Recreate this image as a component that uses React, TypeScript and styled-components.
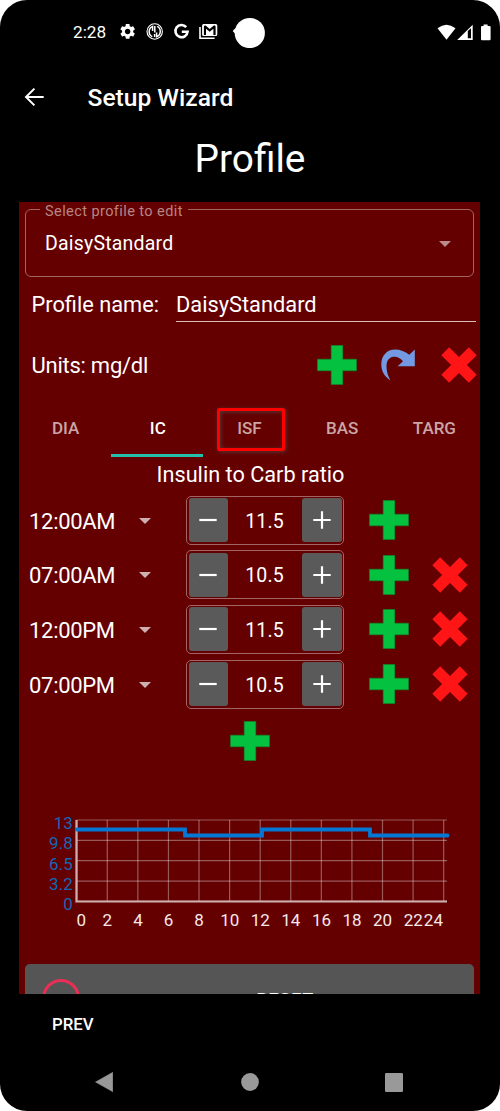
import React from "react";
import styled, { createGlobalStyle } from "styled-components";

const GlobalStyle = createGlobalStyle`
  * { box-sizing: border-box; }
  body {
    margin: 0;
    background: #fff;
    font-family: Roboto, "Liberation Sans", sans-serif;
    color: #fff;
  }
  svg { display: block; flex: none; }
  button {
    font: inherit;
    color: inherit;
    background: none;
    border: 0;
    padding: 0;
    margin: 0;
  }
`;

const Phone = styled.div`
  width: 500px;
  height: 1111px;
  background: #000;
  border-radius: 27px;
  overflow: hidden;
  display: flex;
  flex-direction: column;
`;

const StatusBar = styled.header`
  height: 64px;
  padding: 0 9px 0 73px;
  display: flex;
  align-items: center;
  flex: none;
`;

const Clock = styled.span`
  width: 46px;
  font-size: 17.2px;
  line-height: 64px;
`;

const StatusIcons = styled.div`
  display: flex;
  align-items: center;
  flex: 1;
`;

const SystemIcons = styled.div`
  display: flex;
  align-items: center;
`;

const AppBar = styled.div`
  height: 68px;
  padding-left: 22px;
  display: flex;
  align-items: center;
  gap: 41.5px;
  flex: none;
`;

const AppTitle = styled.h1`
  margin: 0;
  font-size: 24.6px;
  font-weight: 500;
  line-height: 68px;
`;

const PageTitle = styled.h2`
  margin: 0;
  height: 70px;
  line-height: 54px;
  font-size: 38.8px;
  font-weight: 400;
  text-align: center;
  flex: none;
`;

const Panel = styled.main`
  width: 461px;
  height: 792px;
  margin-left: 19px;
  background: #640000;
  overflow: hidden;
  flex: none;
  display: flex;
  flex-direction: column;
`;

const ProfileSelect = styled.fieldset`
  height: 75px;
  margin: 0 6px;
  padding: 0 22px 0 19px;
  border: 1px solid #a26464;
  border-radius: 6px;
  flex: none;
  min-width: 0;
`;

const SelectLegend = styled.legend`
  margin-left: -5px;
  padding: 4px 5px 0 5px;
  font-size: 14.5px;
  line-height: 11px;
  letter-spacing: 0.42px;
  color: #b68686;
`;

const SelectBody = styled.div`
  height: 53px;
  display: flex;
  align-items: center;
  justify-content: space-between;
`;

const SelectValue = styled.span`
  padding-top: 1px;
  font-size: 19.5px;
  line-height: 24px;
  letter-spacing: 0.2px;
`;

const Field = styled.label`
  height: 55px;
  padding: 0 4px 0 12.5px;
  display: flex;
  align-items: center;
  font-size: 21.8px;
  flex: none;
`;

const FieldName = styled.span`
  width: 144.5px;
`;

const FieldInput = styled.span`
  flex: 1;
  height: 34px;
  line-height: 34px;
  border-bottom: 1px solid #d8bcbc;
`;

const UnitsRow = styled.div`
  height: 66px;
  padding: 0 3px 0 12.5px;
  display: flex;
  align-items: center;
  font-size: 22px;
  letter-spacing: -0.25px;
  flex: none;
`;

const UnitsText = styled.span`
  flex: 1;
`;

const Tools = styled.div`
  display: grid;
  grid-template-columns: 64px 60px 36px;
  align-items: center;
`;

const Tabs = styled.nav`
  height: 59px;
  display: grid;
  grid-template-columns: repeat(5, 1fr);
  flex: none;
`;

const Tab = styled.button<{ $active?: boolean }>`
  display: flex;
  align-items: center;
  justify-content: center;
  padding: 3px 0 0 1px;
  border-bottom: 3px solid ${(p) => (p.$active ? "#25c0ac" : "transparent")};
  font-size: 17px;
  font-weight: 500;
  color: ${(p) => (p.$active ? "#fff" : "#cba6a6")};
`;

const Highlight = styled.span`
  width: 68px;
  height: 43px;
  margin: 3px -8px 0 -6px;
  border: 3px solid #fe0000;
  border-radius: 2px;
  box-shadow: 1px 1px 4px rgba(90, 60, 60, 0.9), inset 1px 1px 4px rgba(90, 60, 60, 0.9);
  display: flex;
  align-items: center;
  justify-content: center;
  padding: 0 3px 2px 0;
`;

const SectionTitle = styled.h3`
  margin: 0;
  height: 36px;
  padding-left: 2px;
  line-height: 36px;
  font-size: 21.7px;
  font-weight: 400;
  text-align: center;
  flex: none;
`;

const Rows = styled.div`
  height: 218.4px;
  display: grid;
  grid-template-rows: repeat(4, 54.6px);
  flex: none;
`;

const Row = styled.div`
  display: grid;
  grid-template-columns: 119px 48px 158px 25px 40px 23px 36px;
  align-items: center;
`;

const Time = styled.span`
  padding: 3px 0 0 10px;
  font-size: 22px;
  line-height: 48px;
  letter-spacing: -0.3px;
`;

const CaretSlot = styled.span`
  padding: 1px 0 0 0.5px;
`;

const Stepper = styled.div`
  height: 49px;
  padding: 1.5px;
  border: 1px solid #a26464;
  border-radius: 5px;
  display: flex;
  align-items: center;
`;

const StepButton = styled.button`
  width: 39.5px;
  height: 44px;
  background: #5a5a5b;
  border-radius: 3px;
  display: flex;
  align-items: center;
  justify-content: center;
`;

const StepValue = styled.span`
  flex: 1;
  padding: 3px 1px 0 0;
  text-align: center;
  font-size: 19.5px;
  line-height: 40px;
  letter-spacing: 0.1px;
`;

const Cell = styled.div<{ $col: number }>`
  grid-column: ${(p) => p.$col};
  grid-row: 1;
`;

const AddRow = styled.div`
  height: 99.6px;
  padding: 10px 0 0 1px;
  display: flex;
  justify-content: center;
  flex: none;
`;

const ChartArea = styled.div`
  height: 153px;
  flex: none;
`;

const ResetButton = styled.button`
  height: 68px;
  margin: 0 6px;
  padding-left: 15.5px;
  background: #555;
  border-radius: 5px;
  display: flex;
  align-items: center;
  flex: none;
`;

const ResetLabel = styled.span`
  flex: 1;
  padding: 3px 0 0 16px;
  text-align: center;
  font-size: 18px;
  font-weight: 500;
  letter-spacing: 0.8px;
`;

const Footer = styled.footer`
  height: 60px;
  padding-left: 52px;
  display: flex;
  align-items: center;
  font-size: 16.8px;
  font-weight: 500;
  flex: none;
`;

const NavBar = styled.nav`
  height: 57px;
  padding: 0 97px 0 95px;
  display: flex;
  justify-content: space-between;
  align-items: flex-start;
  flex: none;
`;

const NavKey = styled.button`
  height: 56px;
  display: flex;
  align-items: center;
`;

const Plus = () => (
  <svg width="40" height="40" viewBox="0 0 40 40">
    <path d="M14.2 .5H25.8V14.2H39.5V25.8H25.8V39.5H14.2V25.8H.5V14.2H14.2Z" fill="#04c23f" stroke="#0c8c2c" strokeWidth=".6" />
  </svg>
);

const Cross = () => (
  <svg width="36" height="36" viewBox="0 0 36 36">
    <path d="M8.2 .3L18 10.1 27.8 .3 35.7 8.2 25.9 18 35.7 27.8 27.8 35.7 18 25.9 8.2 35.7 .3 27.8 10.1 18 .3 8.2Z" fill="#ff1515" />
  </svg>
);

const Redo = () => (
  <svg width="34" height="32" viewBox="0 0 34 32">
    <path d="M9.5 31.5C3 27 .3 22 .3 15.5C.3 6.5 6 .5 14 .5C19.5 .5 24 2.5 28.3 5.8L33.8 .5V17.2H16.6L22 12.2C19 8.8 15.8 7.3 12.5 7.8C7.8 8.4 5.4 12 5.5 17.5C5.6 22.5 6.8 27 9.5 31.5Z" fill="#7399e2" />
  </svg>
);

const Caret = ({ color = "#ceb0b0" }: { color?: string }) => (
  <svg width="12" height="6" viewBox="0 0 12 6">
    <path d="M0 0H12L6 6Z" fill={color} />
  </svg>
);

const StepSign = ({ plus }: { plus?: boolean }) => (
  <svg width="18" height="18" viewBox="0 0 18 18">
    <path d={plus ? "M.3 9H17.7M9 .3V17.7" : "M.3 9H17.7"} stroke="#fff" strokeWidth="2.2" />
  </svg>
);

const NotificationIcons = () => (
  <svg width="146" height="32" viewBox="119 16 146 32" fill="#fff">
    <g transform="translate(118.4 22.2) scale(.77)">
      <path d="M19.14 12.94c.04-.3.06-.61.06-.94s-.02-.64-.07-.94l2.03-1.58c.18-.14.23-.41.12-.61l-1.92-3.32c-.12-.22-.37-.29-.59-.22l-2.39.96c-.5-.38-1.03-.7-1.62-.94l-.36-2.54c-.04-.24-.24-.41-.48-.41h-3.84c-.24 0-.43.17-.47.41l-.36 2.54c-.59.24-1.13.57-1.62.94l-2.39-.96c-.22-.08-.47 0-.59.22L2.74 8.87c-.12.21-.08.47.12.61l2.03 1.58c-.05.3-.09.63-.09.94s.02.64.07.94l-2.03 1.58c-.18.14-.23.41-.12.61l1.92 3.32c.12.22.37.29.59.22l2.39-.96c.5.38 1.03.7 1.62.94l.36 2.54c.05.24.24.41.48.41h3.84c.24 0 .44-.17.47-.41l.36-2.54c.59-.24 1.13-.56 1.62-.94l2.39.96c.22.08.47 0 .59-.22l1.92-3.32c.12-.22.07-.47-.12-.61l-2.01-1.58zM12 15.6c-1.98 0-3.6-1.62-3.6-3.6s1.62-3.6 3.6-3.6 3.6 1.62 3.6 3.6-1.62 3.6-3.6 3.6z" />
    </g>
    <g fill="none" stroke="#fff">
      <circle cx="154.7" cy="31.5" r="7.7" strokeWidth="1.1" />
      <path d="M152.3 36.6A5.6 5.6 0 0 1 152.6 26.4V31M157.1 26.4A5.6 5.6 0 0 1 156.6 36.7V32.4M154.8 26V32.5M154.6 37V34" strokeWidth="1.5" />
    </g>
    <path d="M186.2 27.2A6.1 6.1 0 1 0 187.6 31.7H181.8" fill="none" stroke="#fff" strokeWidth="2.6" />
    <path d="M200 27V38.2H214.6" fill="none" stroke="#fff" strokeWidth="1.6" />
    <path d="M203.6 24.1H215.8Q217.3 24.1 217.3 25.6V34.6Q217.3 36.1 215.8 36.1H203.6Q202.1 36.1 202.1 34.6V25.6Q202.1 24.1 203.6 24.1ZM203.9 26.4V34.9H206V28.8L209.7 31.8 213.4 28.8V34.9H215.6V26.4L215 25.6H213.8L209.7 28.9 205.6 25.6H204.5Z" fillRule="evenodd" />
    <circle cx="249.8" cy="33" r="15.1" />
    <path d="M232.8 31.2Q233 30 236 28V34.5Z" />
  </svg>
);

const SignalIcons = () => (
  <svg width="54" height="18" viewBox="437 22 54 18" fill="#fff">
    <path d="M437.5 27.2Q446.5 20.2 455.5 27.2L446.5 38.7Z" />
    <path d="M457.2 39L472.7 23.8V39ZM467.8 30V37.3H471V27.2Z" fillRule="evenodd" />
    <path d="M483.6 23.5H487.6V25H489.6Q490.6 25 490.6 26V38Q490.6 39.3 489.6 39.3H482Q481 39.3 481 38V26Q481 25 482 25H483.6Z" />
  </svg>
);

const hours = [0, 2, 4, 6, 8, 10, 12, 14, 16, 18, 20, 22, 24];
const ratios = ["13", "9.8", "6.5", "3.2", "0"];
const columnWidth = 30.58;
const bandHeight = 20.35;

const RatioChart = () => (
  <svg width="461" height="130" viewBox="19 811 461 130" fontFamily="Roboto, sans-serif" fontSize="17">
    <g stroke="#fff" strokeOpacity=".35" strokeWidth="1.2">
      {ratios.map((r, i) => (
        <path key={r} d={`M76.5 ${820 + i * bandHeight}H447`} />
      ))}
      {hours.map((h, i) => (
        <path key={h} d={`M${76.7 + i * columnWidth} 820V901.5`} />
      ))}
    </g>
    <path d="M76.5 820V901.5H447" fill="none" stroke="#d0b1b1" strokeWidth="2.2" />
    <path d="M76.8 829.5H185V835.5H262V829.5H370V835.5H447.6" fill="none" stroke="#0277d3" strokeWidth="3.8" strokeLinecap="round" />
    <g fill="#1068b8" textAnchor="end" letterSpacing=".1">
      {ratios.map((r, i) => (
        <text key={r} x="73" y={828.9 + i * bandHeight}>{r}</text>
      ))}
    </g>
    <g fill="#f4e8e8" textAnchor="middle">
      {hours.map((h, i) => (
        <text key={h} x={h === 0 ? 81.3 : h === 24 ? 433.4 : 76.8 + i * columnWidth} y="926.2">{h}</text>
      ))}
    </g>
  </svg>
);

const entries = [
  { time: "12:00AM", value: "11.5" },
  { time: "07:00AM", value: "10.5" },
  { time: "12:00PM", value: "11.5" },
  { time: "07:00PM", value: "10.5" },
];

export default function App() {
  return (
    <>
      <GlobalStyle />
      <Phone>
        <StatusBar>
          <Clock>2:28</Clock>
          <StatusIcons><NotificationIcons /></StatusIcons>
          <SystemIcons><SignalIcons /></SystemIcons>
        </StatusBar>
        <AppBar>
          <svg width="24" height="24" viewBox="0 0 24 24" fill="none" stroke="#fff" strokeWidth="2">
            <path d="M21.7 11H4M12.4 2.6L4 11L12.4 19.4" />
          </svg>
          <AppTitle>Setup Wizard</AppTitle>
        </AppBar>
        <PageTitle>Profile</PageTitle>
        <Panel>
          <ProfileSelect>
            <SelectLegend>Select profile to edit</SelectLegend>
            <SelectBody>
              <SelectValue>DaisyStandard</SelectValue>
              <Caret color="#b98c8c" />
            </SelectBody>
          </ProfileSelect>
          <Field>
            <FieldName>Profile name:</FieldName>
            <FieldInput>DaisyStandard</FieldInput>
          </Field>
          <UnitsRow>
            <UnitsText>Units: mg/dl</UnitsText>
            <Tools>
              <Plus />
              <Redo />
              <Cross />
            </Tools>
          </UnitsRow>
          <Tabs>
            <Tab>DIA</Tab>
            <Tab $active>IC</Tab>
            <Tab><Highlight>ISF</Highlight></Tab>
            <Tab>BAS</Tab>
            <Tab>TARG</Tab>
          </Tabs>
          <SectionTitle>Insulin to Carb ratio</SectionTitle>
          <Rows>
            {entries.map((entry, i) => (
              <Row key={entry.time}>
                <Time>{entry.time}</Time>
                <CaretSlot><Caret /></CaretSlot>
                <Stepper>
                  <StepButton><StepSign /></StepButton>
                  <StepValue>{entry.value}</StepValue>
                  <StepButton><StepSign plus /></StepButton>
                </Stepper>
                <Cell $col={5}><Plus /></Cell>
                {i > 0 && <Cell $col={7}><Cross /></Cell>}
              </Row>
            ))}
          </Rows>
          <AddRow><Plus /></AddRow>
          <ChartArea><RatioChart /></ChartArea>
          <ResetButton>
            <svg width="40" height="40" viewBox="0 0 40 40">
              <circle cx="20" cy="20" r="17.5" fill="none" stroke="#e92f55" strokeWidth="3" />
            </svg>
            <ResetLabel>RESET</ResetLabel>
          </ResetButton>
        </Panel>
        <Footer>PREV</Footer>
        <NavBar>
          <NavKey>
            <svg width="18" height="20" viewBox="0 0 18 20"><path d="M17.8 .3V19.7L.5 10Z" fill="#999" stroke="#999" strokeWidth=".5" strokeLinejoin="round" /></svg>
          </NavKey>
          <NavKey>
            <svg width="20" height="18" viewBox="0 0 20 18"><circle cx="11" cy="9" r="8.9" fill="#999" /></svg>
          </NavKey>
          <NavKey>
            <svg width="18" height="19" viewBox="0 0 18 19"><rect width="18" height="19" rx="1.2" fill="#999" /></svg>
          </NavKey>
        </NavBar>
      </Phone>
    </>
  );
}
